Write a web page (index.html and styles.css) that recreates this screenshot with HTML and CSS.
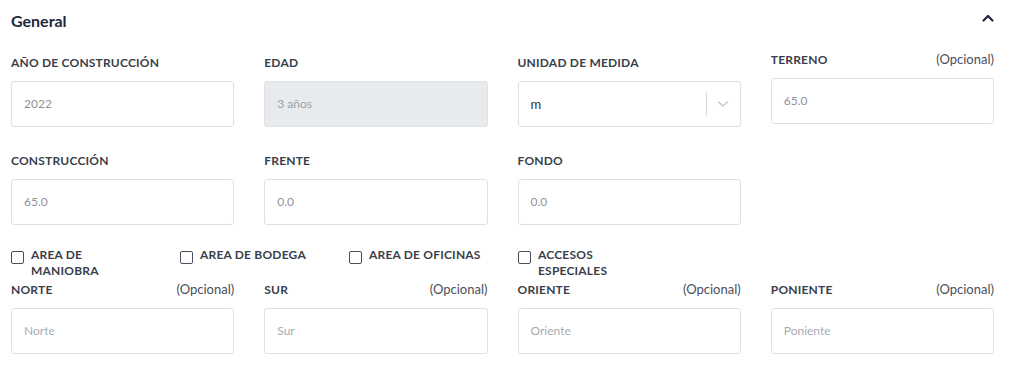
FILE: index.html
```html
<!DOCTYPE html>
<html lang="es">
<head>
  <meta charset="UTF-8" />
  <meta name="viewport" content="width=device-width, initial-scale=1" />
  <title>General</title>
  <link rel="stylesheet" href="styles.css">
</head>
<body>

<section class="panel">
  <!-- Section header -->
  <div class="panel-header">
    <h2>General</h2>
    <svg class="collapse-icon" width="14" height="10" viewBox="0 0 14 10">
      <path d="M2.5 7.5 L7 3 L11.5 7.5" fill="none" stroke="#1e2638" stroke-width="2.2" stroke-linecap="round" stroke-linejoin="round"/>
    </svg>
  </div>

  <div class="form-grid">
    <div class="field">
      <label class="field-label plain">AÑO DE CONSTRUCCIÓN</label>
      <div class="input">2022</div>
    </div>
    <div class="field">
      <label class="field-label plain">EDAD</label>
      <div class="input disabled">3 años</div>
    </div>
    <div class="field">
      <label class="field-label plain">UNIDAD DE MEDIDA</label>
      <div class="input select">
        <span class="select-value">m</span>
        <span class="select-divider"></span>
        <svg class="select-arrow" width="12" height="8" viewBox="0 0 12 8">
          <path d="M1.5 2 L6 6 L10.5 2" fill="none" stroke="#c4c8ce" stroke-width="1.6" stroke-linecap="round" stroke-linejoin="round"/>
        </svg>
      </div>
    </div>
    <div class="field">
      <label class="field-label">TERRENO <span class="optional">(Opcional)</span></label>
      <div class="input">65.0</div>
    </div>

    <div class="field">
      <label class="field-label plain">CONSTRUCCIÓN</label>
      <div class="input">65.0</div>
    </div>
    <div class="field">
      <label class="field-label plain">FRENTE</label>
      <div class="input">0.0</div>
    </div>
    <div class="field">
      <label class="field-label plain">FONDO</label>
      <div class="input">0.0</div>
    </div>
  </div>

  <!-- Checkboxes -->
  <div class="check-row">
    <label class="check"><span class="box"></span><span class="check-text">AREA DE MANIOBRA</span></label>
    <label class="check"><span class="box"></span><span class="check-text">AREA DE BODEGA</span></label>
    <label class="check"><span class="box"></span><span class="check-text">AREA DE OFICINAS</span></label>
    <label class="check"><span class="box"></span><span class="check-text">ACCESOS ESPECIALES</span></label>
  </div>

  <div class="form-grid bounds">
    <div class="field">
      <label class="field-label">NORTE <span class="optional">(Opcional)</span></label>
      <div class="input placeholder">Norte</div>
    </div>
    <div class="field">
      <label class="field-label">SUR <span class="optional">(Opcional)</span></label>
      <div class="input placeholder">Sur</div>
    </div>
    <div class="field">
      <label class="field-label">ORIENTE <span class="optional">(Opcional)</span></label>
      <div class="input placeholder">Oriente</div>
    </div>
    <div class="field">
      <label class="field-label">PONIENTE <span class="optional">(Opcional)</span></label>
      <div class="input placeholder">Poniente</div>
    </div>
  </div>
</section>

</body>
</html>
```

FILE: styles.css
```css
body {
  font-family: 'Lato', 'Noto Sans', sans-serif;
  background-color: #fff;
  color: #3a3f4b;
  margin: 0;
  padding: 0;
}

.panel {
  padding: 0 25px 0 11px;
}

.panel-header {
  height: 40px;
  display: flex;
  align-items: center;
  justify-content: space-between;
}

.panel-header h2 {
  margin: 0;
  font-size: 16px;
  font-weight: 700;
  color: #1e2638;
}

.collapse-icon {
  margin-right: -1px;
  margin-top: -4px;
}

.form-grid {
  display: grid;
  grid-template-columns: repeat(4, 1fr);
  column-gap: 30px;
  row-gap: 21px;
  padding-top: 10px;
}

.field-label {
  display: flex;
  justify-content: space-between;
  align-items: center;
  height: 18px;
  margin-bottom: 10px;
  font-size: 12px;
  font-weight: 700;
  letter-spacing: 0.2px;
  color: #3a3f4b;
}

.field-label.plain {
  padding-top: 3px;
}

.optional {
  font-size: 13px;
  font-weight: 400;
  letter-spacing: 0;
  color: #4a4f5a;
}

.input {
  box-sizing: border-box;
  height: 46px;
  border: 1px solid #dde0e5;
  border-radius: 3px;
  padding: 0 12px 1px;
  display: flex;
  align-items: center;
  font-size: 12px;
  color: #8d929a;
}

.input.disabled {
  background-color: #e8ebee;
  color: #9a9fa6;
}

.input.placeholder {
  color: #a7abb2;
}

.select {
  padding-right: 0;
  color: #333;
}

.select-value {
  flex: 1;
  font-size: 13px;
}

.select-divider {
  width: 1px;
  height: 24px;
  background-color: #d6d9de;
}

.select-arrow {
  margin: 0 11px 0 10px;
}

/* Checkbox row */
.check-row {
  display: grid;
  grid-template-columns: repeat(4, 139px);
  column-gap: 30px;
  margin-top: 22px;
  height: 33px;
}

.check {
  display: flex;
  align-items: flex-start;
  font-size: 12px;
  font-weight: 700;
  letter-spacing: 0.2px;
  line-height: 16px;
  color: #3a3f4b;
}

.box {
  flex: none;
  box-sizing: border-box;
  width: 13px;
  height: 13px;
  border: 1px solid #4a4f5a;
  border-radius: 2px;
  margin: 4px 7px 0 0;
}

.check-text {
  max-width: 114px;
}

.bounds {
  padding-top: 0;
}
```
